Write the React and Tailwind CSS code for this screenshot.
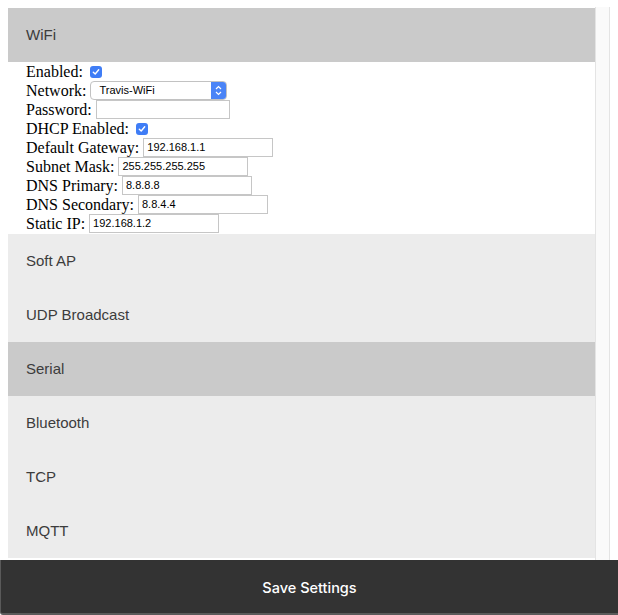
import React from "react";

const sans = { fontFamily: '"Liberation Sans", Arial, sans-serif' };

function Check() {
  return (
    <span className="ml-[3px] mt-[4px] w-[12px] h-[12px] rounded-[3px] bg-[#3f7df6] flex items-center justify-center">
      <svg width="8" height="8" viewBox="0 0 8 8">
        <path d="M1.3 4.2 L3.2 6 L6.7 1.8" fill="none" stroke="white" strokeWidth="1.4" strokeLinecap="round" strokeLinejoin="round" />
      </svg>
    </span>
  );
}

function Field({ value, w = "w-[130px]" }) {
  return (
    <span
      className={`block h-[19px] ${w} border border-[#c6c6c6] bg-white text-[11px] leading-[17px] pl-[3px] text-black`}
      style={sans}
    >
      {value}
    </span>
  );
}

function Select() {
  return (
    <span
      className="flex h-[19px] w-[137px] border border-[#c2c2c2] rounded-[4px] bg-white text-[11px] text-black overflow-hidden"
      style={sans}
    >
      <span className="flex-1 pl-[8px] leading-[17px]">Travis-WiFi</span>
      <span className="w-[15px] bg-[#4a84f7] flex items-center justify-center">
        <svg width="7" height="11" viewBox="0 0 7 11">
          <path d="M1 4 L3.5 1.5 L6 4 M1 7 L3.5 9.5 L6 7" fill="none" stroke="white" strokeWidth="1.2" />
        </svg>
      </span>
    </span>
  );
}

function Section({ title, active }) {
  return (
    <div
      className={`h-[54px] shrink-0 flex items-center px-[18px] text-[15px] text-[#3c3c3c] ${active ? "bg-[#cacaca]" : "bg-[#ececec]"}`}
      style={sans}
    >
      {title}
    </div>
  );
}

export default function App() {
  const rows = [
    ["Enabled:", <Check />],
    ["Network:", <Select />],
    ["Password:", <Field value="" w="w-[134px]" />],
    ["DHCP Enabled:", <Check />],
    ["Default Gateway:", <Field value="192.168.1.1" />],
    ["Subnet Mask:", <Field value="255.255.255.255" />],
    ["DNS Primary:", <Field value="8.8.8.8" />],
    ["DNS Secondary:", <Field value="8.8.4.4" />],
    ["Static IP:", <Field value="192.168.1.2" />],
  ];

  return (
    <div className="h-[615px] w-[618px] bg-white flex flex-col overflow-hidden">
      <div className="flex-1 flex pl-[8px] pt-[8px] min-h-0">
        <div className="w-[587px] flex flex-col">
          <Section title="WiFi" active />
          <div
            className="pl-[18px] pb-[1px] text-[16px] leading-[19px] text-black"
            style={{ fontFamily: '"Liberation Serif", "Times New Roman", serif' }}
          >
            {rows.map(([label, ctrl], i) => (
              <div key={i} className="h-[19px] flex items-start gap-[4px] whitespace-nowrap">
                <span>{label}</span>
                {ctrl}
              </div>
            ))}
          </div>
          <Section title="Soft AP" />
          <Section title="UDP Broadcast" />
          <Section title="Serial" active />
          <Section title="Bluetooth" />
          <Section title="TCP" />
          <Section title="MQTT" />
        </div>
        <div className="w-[15px] -mt-[1px] bg-[#fafafa] border-l border-r border-[#e4e4e4]" />
      </div>
      <div
        className="h-[55px] shrink-0 pt-[2px] bg-[#333333] border-b-2 border-l border-[#5a5a5a] rounded-bl-[3px] flex items-center justify-center text-white text-[14.5px] font-medium"
        style={{ fontFamily: 'Inter, "Liberation Sans", sans-serif' }}
      >
        Save Settings
      </div>
    </div>
  );
}
